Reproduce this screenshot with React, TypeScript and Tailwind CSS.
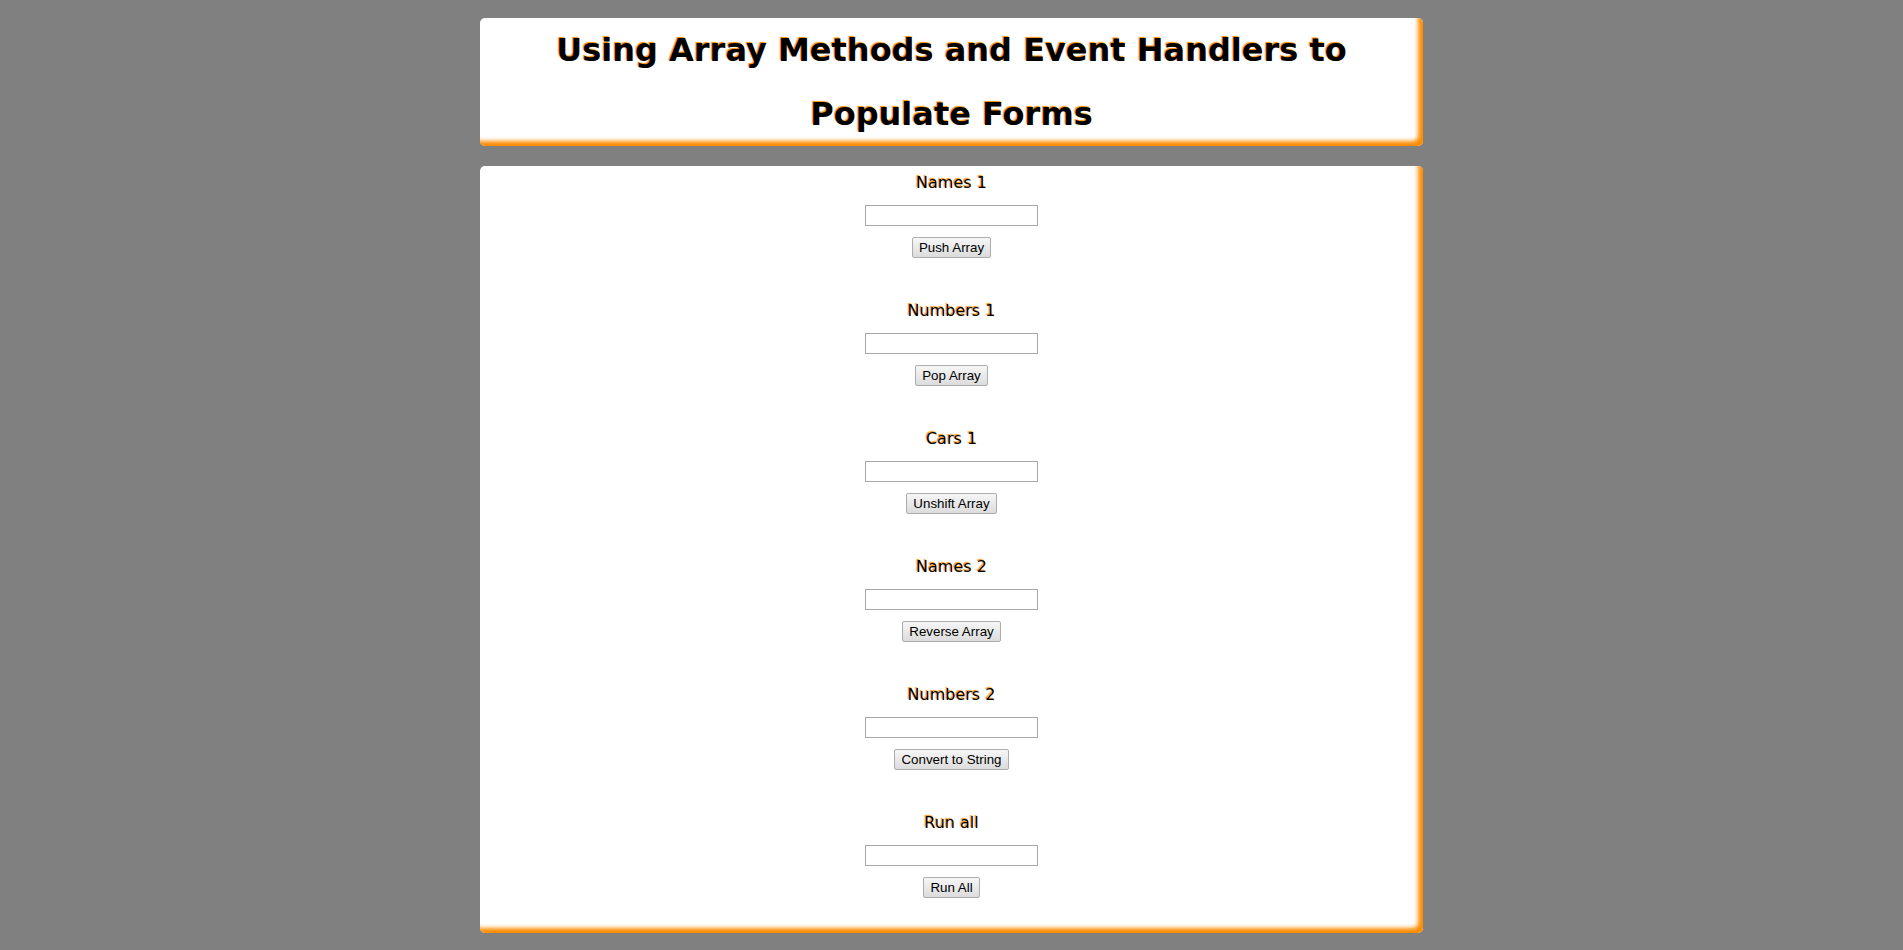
import React from 'react'

type Group = {
  label: string
  button: string
}

const groups: Group[] = [
  { label: 'Names 1', button: 'Push Array' },
  { label: 'Numbers 1', button: 'Pop Array' },
  { label: 'Cars 1', button: 'Unshift Array' },
  { label: 'Names 2', button: 'Reverse Array' },
  { label: 'Numbers 2', button: 'Convert to String' },
  { label: 'Run all', button: 'Run All' },
]

const panel =
  'mx-auto w-[943px] rounded-[5px] bg-white shadow-[inset_-5px_-5px_4px_#ff8c00]'

function FormGroup({ group, last }: { group: Group; last: boolean }) {
  return (
    <div className={last ? 'flex flex-col items-center' : 'flex flex-col items-center mb-[43px]'}>
      <p className="h-[20px] text-[16px] leading-[20px] text-black [font-family:'DejaVu_Sans',Verdana,sans-serif] [text-shadow:-1px_-1px_1px_#ff8c00]">
        {group.label}
      </p>
      <input
        type="text"
        className="mt-[12px] h-[21px] w-[173px] border border-[#a9a9a9] bg-white px-[2px] text-[13px] outline-none"
      />
      <button
        type="button"
        className="mt-[11px] h-[21px] rounded-[2px] border border-[#adadad] bg-gradient-to-b from-[#f6f6f6] to-[#dcdcdc] px-[6px] text-[13.33px] leading-[17px] text-black [font-family:'Liberation_Sans',Arial,sans-serif]">
        {group.button}
      </button>
    </div>
  )
}

export default function App() {
  return (
    <div className="min-h-screen bg-[#808080] pt-[18px] pb-[17px]">
      <header className={`${panel} h-[128px]`}>
        <h1 className="text-center text-[32px] font-bold leading-[64px] text-black [font-family:'DejaVu_Sans',Verdana,sans-serif] [text-shadow:-1px_-1px_1px_#ff8c00]">
          Using Array Methods and Event Handlers to
          <br />
          Populate Forms
        </h1>
      </header>

      <main className={`${panel} mt-[20px] pt-[7px] pb-[35px]`}>
        {groups.map((g, i) => (
          <FormGroup key={g.label} group={g} last={i === groups.length - 1} />
        ))}
      </main>
    </div>
  )
}
